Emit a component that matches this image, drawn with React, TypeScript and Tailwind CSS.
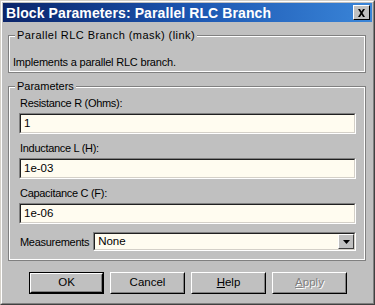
import { FC, ReactNode } from "react";

const font = { fontFamily: '"Liberation Sans", Arial, sans-serif' };

const Sunken: FC<{ children?: ReactNode; className?: string }> = ({ children, className }) => (
    <div className={`border border-t-[#808080] border-l-[#808080] border-b-white border-r-white ${className ?? ""}`}>
        <div className="h-full border border-t-[#202020] border-l-[#202020] border-b-[#d4d0c8] border-r-[#d4d0c8] bg-[#fffcf0]">
            {children}
        </div>
    </div>
);

const Group: FC<{ title: string; titleClass?: string; className?: string; children?: ReactNode }> = ({ title, titleClass, className, children }) => (
    <div className={`relative border border-[#808080] ${className ?? ""}`}>
        <div className="absolute inset-0 border-r border-b border-white pointer-events-none" />
        <div className="absolute inset-0 border-l border-t border-white pointer-events-none" />
        <span className={`absolute -top-[8px] left-[6px] bg-[#c0c0c0] px-[2px] text-[11px] leading-[14px] text-black ${titleClass ?? ""}`}>{title}</span>
        {children}
    </div>
);

const Button: FC<{ label: ReactNode; isDefault?: boolean; disabled?: boolean }> = ({ label, isDefault, disabled }) => (
    <div className={`w-[75px] h-[22px] ${isDefault ? "border border-black" : ""}`}>
        <div className="h-full border border-t-white border-l-white border-b-black border-r-black">
            <div className="h-full flex items-center justify-center border border-t-[#c0c0c0] border-l-[#c0c0c0] border-b-[#808080] border-r-[#808080] text-[11.5px]">
                {disabled ? (
                    <span className="text-[#808080] [text-shadow:1px_1px_0_#fff]">{label}</span>
                ) : (
                    <span className="text-black">{label}</span>
                )}
            </div>
        </div>
    </div>
);

const Field: FC<{ label: string; value: string }> = ({ label, value }) => (
    <div className="flex flex-col">
        <div className="text-[11px] tracking-[-0.3px] leading-[14px] h-[14px] pl-[1px]">{label}</div>
        <Sunken className="mt-[3px] h-[21px]">
            <div className="pl-[3px] text-[11.5px] leading-[17px]">{value}</div>
        </Sunken>
    </div>
);

export default function App() {
    return (
        <div className="w-[375px] h-[305px] bg-[#c0c0c0] text-black overflow-hidden" style={font}>
            <div className="h-full border border-t-[#d4d0c8] border-l-[#d4d0c8] border-b-[#404040] border-r-[#404040]">
                <div className="h-full border border-t-white border-l-white border-b-[#808080] border-r-[#808080] p-[1px] flex flex-col">
                    {/* title bar */}
                    <div className="h-[19px] flex items-center justify-between pl-[3px] pr-[2px] bg-gradient-to-r from-[#0a246a] via-[#1c55b0] to-[#3a85d8]">
                        <span className="text-white font-bold text-[14px] leading-[18px] tracking-[0.1px]">Block Parameters: Parallel RLC Branch</span>
                        <div className="w-[17px] h-[15px] bg-[#c0c0c0] border border-t-white border-l-white border-b-black border-r-black flex items-center justify-center">
                            <svg width="9" height="8" viewBox="0 0 9 8">
                                <path d="M1 0h2l1.5 2.5L6 0h2L5.5 4 8 8H6L4.5 5.5 3 8H1l2.5-4z" fill="#000" />
                            </svg>
                        </div>
                    </div>

                    <Group title="Parallel RLC Branch (mask) (link)" titleClass="tracking-[0.45px]" className="mt-[13px] ml-[5px] mr-[6px] h-[38px]">
                        <div className="text-[11px] tracking-[-0.2px] leading-[14px] pl-[4px] pt-[19px]">Implements a parallel RLC branch.</div>
                    </Group>

                    <Group title="Parameters" className="mt-[13px] ml-[5px] mr-[6px] h-[175px]">
                        <div className="flex flex-col gap-[7px] pl-[10px] pr-[9px] pt-[9px]">
                            <Field label="Resistance R (Ohms):" value="1" />
                            <Field label="Inductance L (H):" value="1e-03" />
                            <Field label="Capacitance C (F):" value="1e-06" />
                            <div className="flex items-center gap-[4px] mt-[1px]">
                                <span className="text-[11px] tracking-[-0.3px] leading-[14px] pl-[1px]">Measurements</span>
                                <Sunken className="flex-1 h-[19px]">
                                    <div className="flex items-center justify-between h-full">
                                        <span className="pl-[3px] text-[11.5px] leading-[15px]">None</span>
                                        <div className="w-[16px] h-full bg-[#c0c0c0] border border-t-white border-l-white border-b-[#404040] border-r-[#404040] flex items-center justify-center">
                                            <svg width="7" height="4" viewBox="0 0 7 4">
                                                <path d="M0 0h7L3.5 4z" fill="#000" />
                                            </svg>
                                        </div>
                                    </div>
                                </Sunken>
                            </div>
                        </div>
                    </Group>

                    <div className="flex justify-center gap-[6px] mt-[11px] pl-[1px]">
                        <Button label="OK" isDefault />
                        <Button label="Cancel" />
                        <Button label={<><span className="underline">H</span>elp</>} />
                        <Button label={<><span className="underline">A</span>pply</>} disabled />
                    </div>
                </div>
            </div>
        </div>
    );
}
